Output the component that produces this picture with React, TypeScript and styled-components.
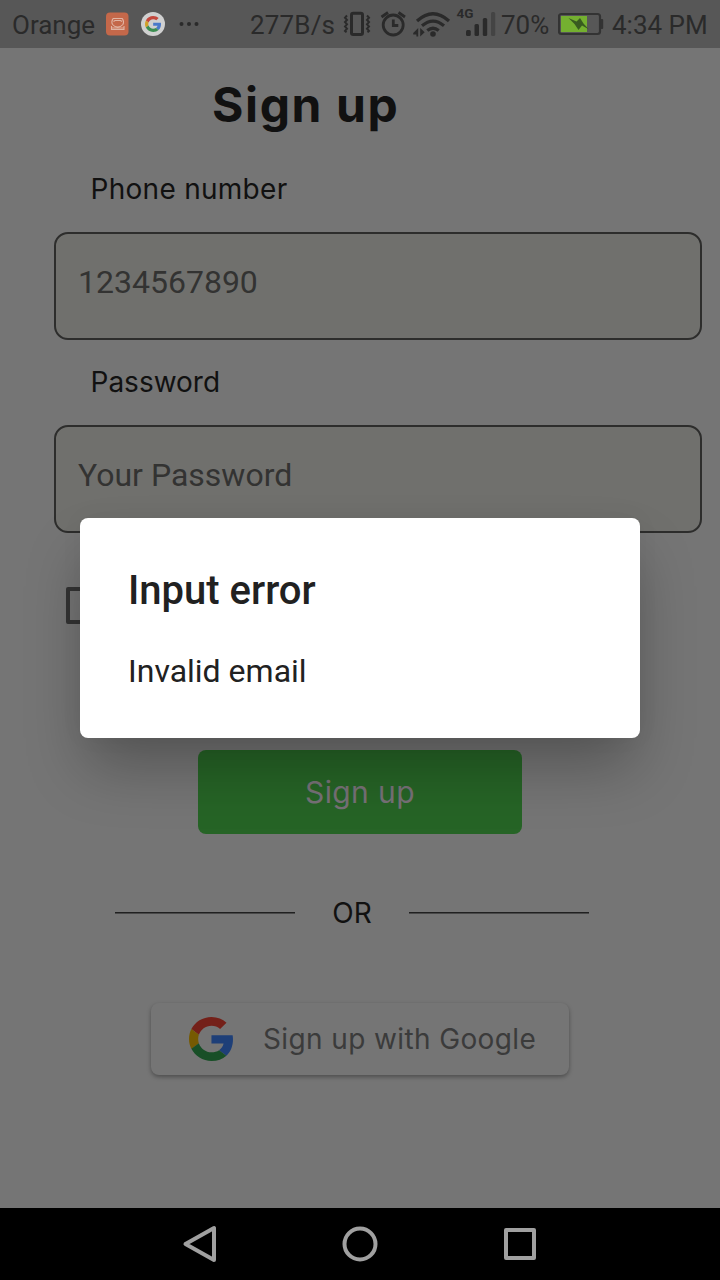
import React from "react";
import styled, { createGlobalStyle } from "styled-components";

const GlobalStyle = createGlobalStyle`
  * { box-sizing: border-box; }
  body { margin: 0; background: #757575; }
`;

const Screen = styled.div`
  position: relative;
  width: 720px;
  height: 1280px;
  display: flex;
  flex-direction: column;
  overflow: hidden;
  background: #757575;
  font-family: Inter, "Liberation Sans", sans-serif;
  color: #111;
`;

const StatusBar = styled.header`
  height: 48px;
  flex: none;
  display: flex;
  align-items: center;
  padding-left: 12px;
  background: #575757;
  color: #2a2a2a;
`;

const StatusText = styled.span<{ $width: number; $gap?: number; $spacing?: number }>`
  flex: none;
  width: ${(p) => p.$width}px;
  height: 48px;
  padding-top: 1px;
  margin-left: ${(p) => p.$gap ?? 0}px;
  letter-spacing: ${(p) => p.$spacing ?? 0}px;
  font: 400 26px/48px Roboto, sans-serif;
  white-space: nowrap;
`;

const StatusIcon = styled.svg<{ $gap: number }>`
  flex: none;
  display: block;
  margin-left: ${(p) => p.$gap}px;
`;

const Form = styled.main`
  flex: 1;
  display: flex;
  flex-direction: column;
  align-items: flex-start;
`;

const Title = styled.h1`
  margin: 27px 0 0 212px;
  font-size: 48px;
  line-height: 60px;
  font-weight: 700;
  letter-spacing: 1.6px;
  white-space: nowrap;
`;

const Label = styled.label<{ $top: number; $spacing: number }>`
  margin: ${(p) => p.$top}px 0 0 90.5px;
  height: 40px;
  font-size: 28px;
  line-height: 40px;
  letter-spacing: ${(p) => p.$spacing}px;
  white-space: nowrap;
`;

const Field = styled.div`
  margin: 23px 0 0 54px;
  width: 648px;
  height: 108px;
  padding: 0 22px 9px;
  display: flex;
  align-items: center;
  border: 2px solid #2d2d2c;
  border-radius: 14px;
  background: #70706d;
  color: #333332;
  font: 400 32px/40px Roboto, sans-serif;
`;

const Checkbox = styled.div`
  margin: 54px 0 0 66px;
  width: 37px;
  height: 37px;
  border: 4px solid #343434;
  border-radius: 2px;
`;

const SubmitButton = styled.button`
  margin: 126px 0 0 198px;
  width: 324px;
  height: 84px;
  padding: 0;
  border: 0;
  border-radius: 8px;
  background: #266426;
  color: #777177;
  font: 400 30px/84px Inter, sans-serif;
  letter-spacing: 0.4px;
`;

const Divider = styled.div`
  margin: 59px 0 0 115px;
  width: 474px;
  height: 40px;
  display: flex;
  align-items: center;
  justify-content: space-between;
  font-size: 28px;
  line-height: 40px;
`;

const Rule = styled.span`
  width: 180px;
  height: 2px;
  margin-bottom: 1px;
  border-top: 1px solid #202020;
  border-bottom: 1px solid #484848;
`;

const GoogleButton = styled.button`
  margin: 70px 0 0 151px;
  width: 418px;
  height: 72px;
  padding: 0 0 0 38px;
  display: flex;
  align-items: center;
  gap: 30px;
  border: 0;
  border-radius: 8px;
  background: #757575;
  box-shadow: 0 2px 4px rgba(0, 0, 0, 0.34);
  color: #3b3b3b;
  font: 400 28px/40px Inter, sans-serif;
  white-space: nowrap;
`;

const GoogleText = styled.span`
  letter-spacing: 0.38px;
`;

const Dialog = styled.section`
  position: absolute;
  left: 80px;
  top: 518px;
  width: 560px;
  height: 220px;
  padding: 49px 48px 0;
  border-radius: 8px;
  background: #fff;
  color: #212121;
  font-family: Roboto, sans-serif;
  box-shadow: 0 34px 60px -6px rgba(0, 0, 0, 0.28), 0 0 24px rgba(0, 0, 0, 0.04);
`;

const DialogTitle = styled.h2`
  margin: 0;
  font-size: 40px;
  line-height: 48px;
  font-weight: 500;
`;

const DialogText = styled.p`
  margin: 36px 0 0;
  font-size: 32px;
  line-height: 40px;
`;

const NavBar = styled.nav`
  height: 72px;
  flex: none;
  display: flex;
  align-items: center;
  justify-content: center;
  gap: 120px;
  background: #000;
`;

const GoogleLogo = ({ size, dim }: { size: number; dim?: boolean }) => {
  const c = dim
    ? ["#742019", "#1e3f78", "#765a02", "#184f27"]
    : ["#c4473c", "#4a79c9", "#d0a12a", "#3b8d50"];
  return (
    <svg width={size} height={size} viewBox="0 0 47 48" preserveAspectRatio="none">
      <path fill={c[0]} d="M24 9.5c3.54 0 6.71 1.22 9.21 3.6l6.85-6.85C35.9 2.38 30.47 0 24 0 14.62 0 6.51 5.38 2.56 13.22l7.98 6.19C12.43 13.72 17.74 9.5 24 9.5z" />
      <path fill={c[1]} d="M46.98 24.55c0-1.57-.15-3.09-.38-4.55H24v9.02h12.94c-.58 2.96-2.26 5.48-4.78 7.18l7.73 6c4.51-4.18 7.09-10.36 7.09-17.65z" />
      <path fill={c[2]} d="M10.53 28.59c-.48-1.45-.76-2.99-.76-4.59s.27-3.14.76-4.59l-7.98-6.19C.92 16.46 0 20.12 0 24c0 3.88.92 7.54 2.56 10.78l7.97-6.19z" />
      <path fill={c[3]} d="M24 48c6.48 0 11.93-2.13 15.89-5.81l-7.73-6c-2.15 1.45-4.92 2.3-8.16 2.3-6.26 0-11.57-4.22-13.47-9.91l-7.98 6.19C6.51 42.62 14.62 48 24 48z" />
    </svg>
  );
};

const GoogleBadge = styled.span`
  flex: none;
  width: 24px;
  height: 24px;
  margin-left: 12px;
  display: flex;
  align-items: center;
  justify-content: center;
  border-radius: 50%;
  background: #d0d0d0;
`;

const INK = "#2a2a2a";

export default function App() {
  return (
    <>
      <GlobalStyle />
      <Screen>
        <StatusBar>
          <StatusText $width={94}>Orange</StatusText>
          <StatusIcon $gap={0} width="23" height="24" viewBox="0 0 23 24" fill="none">
            <rect x="0" y="0.5" width="22.5" height="23" rx="4" fill="#c4684a" />
            <g stroke="#e0b5a4" strokeWidth="1.1">
              <path d="M7 6.500h9.500M7 6.500q-2 3.500-.5 6 2 2.500 5.200 2.500t5.200-2.500q1.500-2.500-.5-6M7.500 9.500l1.500-1h5.500l1.500 1M5.500 14v3.500h12.500V14M5.500 16h12.500" />
            </g>
          </StatusIcon>
          <GoogleBadge><GoogleLogo size={16} /></GoogleBadge>
          <StatusIcon $gap={14} width="20" height="6" viewBox="0 0 20 6" fill={INK}>
            <circle cx="2.5" cy="3" r="2" /><circle cx="10" cy="3" r="2" /><circle cx="17.5" cy="3" r="2" />
          </StatusIcon>
          <StatusText $gap={51} $width={93} $spacing={0.15}>277B/s</StatusText>
          <StatusIcon $gap={0} width="28" height="26" viewBox="343 11 28 26" fill="none" stroke={INK}>
            <rect x="351.5" y="13.3" width="11" height="21.2" rx="1.8" strokeWidth="3" />
            <path strokeWidth="2" d="M347 15.5l-2 2.2 2 2.2-2 2.2 2 2.2-2 2.2 2 2.2-2 2.2 1.5 1.5M367 15.5l2 2.2-2 2.2 2 2.2-2 2.2 2 2.2-2 2.2 2 2.2-1.5 1.5" />
          </StatusIcon>
          <StatusIcon $gap={9} width="27" height="26" viewBox="380 11 27 26" fill="none" stroke={INK} strokeWidth="2.8">
            <circle cx="393.2" cy="25" r="10" />
            <path d="M393.3 19.5v6h5M381.5 17l6.5-4.5M398.5 12.5l6.5 4.5" />
          </StatusIcon>
          <StatusIcon $gap={6} width="38" height="28" viewBox="413 10 38 28" fill="none" stroke={INK} strokeWidth="3.2">
            <path d="M417 21q16-14.500 32 0M422 25.800q11-9.500 22 0M427.300 30.500q5.700-4.500 11.400 0" />
            <g fill={INK} stroke="none">
              <circle cx="433" cy="34" r="2.8" />
              <path d="M418.200 28v8.500h-1.800v-2h-3.200v-1.500zM420.200 28v8.500l4.500-4.300z" />
            </g>
          </StatusIcon>
          <StatusIcon $gap={5} width="40" height="48" viewBox="456 0 40 48" fill={INK}>
            <text x="456.500" y="18" fontFamily="Roboto, sans-serif" fontWeight="700" fontSize="13.5">4G</text>
            <rect x="466" y="30" width="4.8" height="6" rx="1.5" />
            <rect x="474.5" y="24" width="4.5" height="12" rx="1.5" />
            <rect x="482.8" y="18" width="4.4" height="18" rx="1.5" />
            <rect x="491" y="12" width="4.2" height="24" rx="1.5" fill="#444" />
          </StatusIcon>
          <StatusText $gap={5} $width={57}>70%</StatusText>
          <StatusIcon $gap={0} width="46" height="24" viewBox="558 12 46 24">
            <rect x="559" y="14" width="41" height="20" rx="2.5" fill="none" stroke="#333" strokeWidth="2.2" />
            <rect x="561" y="16" width="26" height="16" fill="#74b030" />
            <rect x="600.5" y="19" width="2.7" height="10" rx="1" fill="#333" />
            <path d="M568.500 18l8 3.500 3.500-3.500 3.500 5.500 5.500 6-7-4-3.500 4.500-4-6z" fill="#385b20" />
          </StatusIcon>
          <StatusText $gap={8} $width={100}>4:34 PM</StatusText>
        </StatusBar>

        <Form>
          <Title>Sign up</Title>
          <Label $top={34} $spacing={0.28}>Phone number</Label>
          <Field>1234567890</Field>
          <Label $top={22} $spacing={0}>Password</Label>
          <Field>Your Password</Field>
          <Checkbox />
          <SubmitButton>Sign up</SubmitButton>
          <Divider><Rule />OR<Rule /></Divider>
          <GoogleButton>
            <GoogleLogo size={44} dim />
            <GoogleText>Sign up with Google</GoogleText>
          </GoogleButton>
        </Form>

        <NavBar>
          <svg width="40" height="40" viewBox="0 0 40 40" fill="none" stroke="#a0a0a0" strokeWidth="4" strokeLinejoin="round">
            <path d="M34 4v32L5.500 20z" />
          </svg>
          <svg width="40" height="40" viewBox="0 0 40 40" fill="none" stroke="#a0a0a0" strokeWidth="4">
            <circle cx="20" cy="20" r="15.500" />
          </svg>
          <svg width="40" height="40" viewBox="0 0 40 40" fill="none" stroke="#a0a0a0" strokeWidth="4" strokeLinejoin="round">
            <rect x="6" y="6" width="28" height="28" />
          </svg>
        </NavBar>

        <Dialog role="alertdialog">
          <DialogTitle>Input error</DialogTitle>
          <DialogText>Invalid email</DialogText>
        </Dialog>
      </Screen>
    </>
  );
}
